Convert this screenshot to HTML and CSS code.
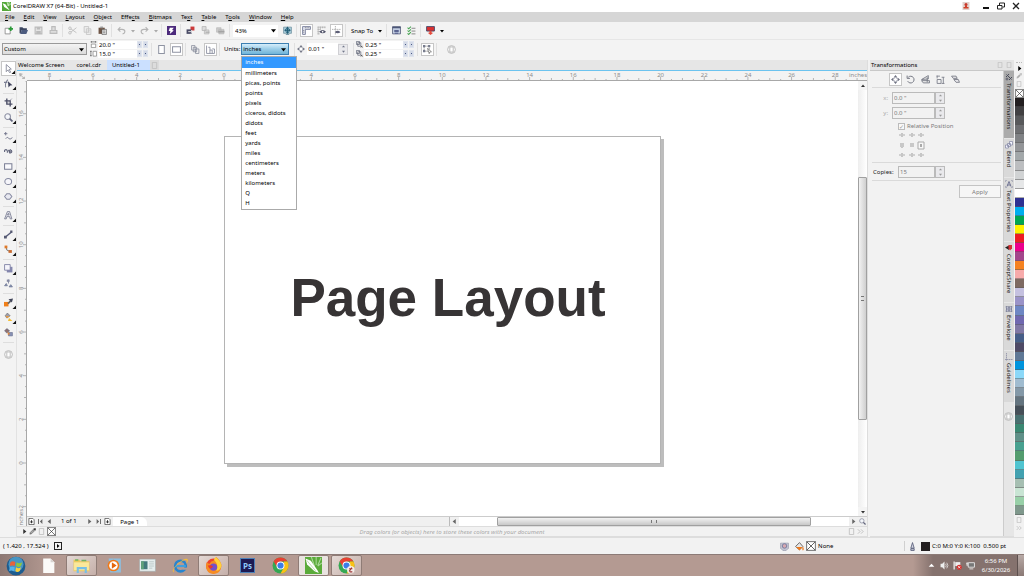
FILE: index.html
```html
<!DOCTYPE html>
<html lang="en">
<head>
<meta charset="utf-8">
<title>CorelDRAW X7 (64-Bit) - Untitled-1</title>
<link rel="stylesheet" href="styles.css">
</head>
<body>
<svg class="defs" aria-hidden="true">
  <symbol id="new" viewBox="0 0 16 16"><path d="M2 4h9v10H2z" fill="#fff" stroke="#888" stroke-width="1.5"/><path d="M12 1v8M8 5h8" stroke="#2d9b3a" stroke-width="3"/></symbol>
  <symbol id="open" viewBox="0 0 16 16"><path d="M1 2h5l2 2h6v3H5l-2 6H1z" fill="#3c4660"/><path d="M5 7h11l-3 7H2z" fill="#4d5c80"/></symbol>
  <symbol id="save" viewBox="0 0 16 16"><path d="M2 2h12v12H2z" fill="#e3e3e3" stroke="#bbb" stroke-width="2"/><path d="M5 2h6v4H5zM4 9h8v5H4z" fill="#bbb"/></symbol>
  <symbol id="print" viewBox="0 0 16 16"><path d="M5 1h6v7H5zM2 8h12v5H2z" fill="#ddd" stroke="#bbb" stroke-width="2"/></symbol>
  <symbol id="cut" viewBox="0 0 16 16"><path d="M5 5l10 7M5 11l10-8" stroke="#bbb" stroke-width="1.5"/><circle cx="3.5" cy="4" r="2.3" fill="none" stroke="#bbb" stroke-width="1.5"/><circle cx="3.5" cy="12" r="2.3" fill="none" stroke="#bbb" stroke-width="1.5"/></symbol>
  <symbol id="copy" viewBox="0 0 16 16"><path d="M2 1h8v10H2zM6 5h8v10H6z" fill="#eee" stroke="#c4c4c4" stroke-width="1.5"/><path d="M8 8h4M8 11h4" stroke="#c4c4c4"/></symbol>
  <symbol id="paste" viewBox="0 0 16 16"><path d="M1 3h11v11H1z" fill="#6e5546"/><path d="M4 1h5v3H4z" fill="#999"/><path d="M7 6h8v9H7z" fill="#e8e8e8" stroke="#444"/><path d="M9 9h4M9 12h4" stroke="#444"/></symbol>
  <symbol id="undo" viewBox="0 0 16 16"><path d="M6 2L2 6l4 4M2 6h7q5 0 5 4 0 3-4 4" fill="none" stroke="#b4b4b4" stroke-width="2"/></symbol>
  <symbol id="redo" viewBox="0 0 16 16"><path d="M10 2l4 4-4 4M14 6H7q-5 0-5 4 0 3 4 4" fill="none" stroke="#b4b4b4" stroke-width="2"/></symbol>
  <symbol id="caret" viewBox="0 0 8 8"><path d="M0 2h8L4 7z" fill="currentColor"/></symbol>
  <symbol id="connect" viewBox="0 0 16 16"><path d="M0 0h16v16H0z" fill="#4c2a7c"/><path d="M5 3h7L9 7l3 1-7 6 1-5H3z" fill="#fff"/></symbol>
  <symbol id="import" viewBox="0 0 16 16"><path d="M8 1h7v7H8z" fill="#cc3b3b"/><path d="M1 6h9v8H1z" fill="#4a4c66"/><path d="M4 10h8M9 7l3 3-3 3" fill="none" stroke="#f4f4f4" stroke-width="1.5"/></symbol>
  <symbol id="export" viewBox="0 0 16 16"><path d="M2 1h7v7H2zM6 7h8v7H6z" fill="#ddd" stroke="#b8b8b8" stroke-width="1.5"/><path d="M8 11h7" stroke="#aaa" stroke-width="2"/></symbol>
  <symbol id="pdf" viewBox="0 0 16 16"><path d="M1 3h8v8H1zM5 6h9v8H5z" fill="#ccc" stroke="#b0b0b0"/><path d="M4 10h11" stroke="#a4a4a4" stroke-width="3"/></symbol>
  <symbol id="full" viewBox="0 0 16 16"><path d="M1 2h14v11H1z" fill="#a9cddb" stroke="#7b9aa8" stroke-width="1.5"/><path d="M5 15h6" stroke="#7b9aa8" stroke-width="2"/><path d="M8 1l3 4H5zM8 14l3-4H5zM2 7.500l4-3v6zM14 7.500l-4-3v6z" fill="#235f78"/><path d="M8 4v7M5 7.500h6" stroke="#235f78" stroke-width="2"/></symbol>
  <symbol id="rulers" viewBox="0 0 16 16"><path d="M1 1h14v5H6v9H1z" fill="#dfe3ef" stroke="#737995" stroke-width="1.5"/><path d="M6 2v2M9 2v2M12 2v2M2 8h2M2 11h2" stroke="#555"/></symbol>
  <symbol id="grid" viewBox="0 0 16 16"><path d="M1 2h14M1 6h6M1 10h4M1 14h4M2 1v14M6 1v5M10 1v3M14 1v3" stroke="#9a9a9a"/><path d="M4 10q6-6 12 0-6 6-12 0" fill="#4f5168"/><circle cx="10" cy="10" r="1.5" fill="#fff"/></symbol>
  <symbol id="guides" viewBox="0 0 16 16"><path d="M6 0v16M0 6h16" stroke="#777" stroke-dasharray="2 1"/><path d="M5 11q5-5 10 0-5 4-10 0" fill="#5d5f77"/></symbol>
  <symbol id="options" viewBox="0 0 16 16"><path d="M1 1h14v13H1z" fill="#c8d3e6" stroke="#555d7a" stroke-width="1.5"/><path d="M1 3h14" stroke="#3c466b" stroke-width="2"/><path d="M4 7h8v4H4z" fill="#5b6490"/><path d="M5 13h6" stroke="#5b6490" stroke-width="2"/></symbol>
  <symbol id="checks" viewBox="0 0 16 16"><path d="M1 3l2 2 4-4M1 8l2 2 4-4M1 13l2 2 4-4" fill="none" stroke="#45a350" stroke-width="1.8"/><path d="M8 4h7M8 9h7M8 14h7" stroke="#777" stroke-width="1.5"/></symbol>
  <symbol id="launch" viewBox="0 0 16 16"><path d="M1 1h14v8H1z" fill="#d93131" stroke="#3d4668" stroke-width="1.5"/><path d="M6 9h4v3h3l-5 4-5-4h3z" fill="#e5493a"/></symbol>
  <symbol id="pw" viewBox="0 0 16 16"><path d="M3 7h10v8H3z" fill="#fff" stroke="#777" stroke-width="1.5"/><path d="M2 2h12M3 0v4M13 0v4" stroke="#555" stroke-width="1.5"/></symbol>
  <symbol id="ph" viewBox="0 0 16 16"><path d="M7 3h8v11H7z" fill="#fff" stroke="#777" stroke-width="1.5"/><path d="M2 2v12M0 3h4M0 13h4" stroke="#555" stroke-width="1.5"/></symbol>
  <symbol id="portrait" viewBox="0 0 16 16"><path d="M3 1h10v14H3z" fill="#fff" stroke="#8e93a2" stroke-width="1.8"/></symbol>
  <symbol id="landscape" viewBox="0 0 16 16"><path d="M1 3h14v10H1z" fill="#fff" stroke="#8e93a2" stroke-width="1.8"/></symbol>
  <symbol id="pages" viewBox="0 0 16 16"><path d="M1 1h6v8H1zM4 4h6v8H4zM8 7h6v8H8z" fill="#f4f4f4" stroke="#808596" stroke-width="1.3"/></symbol>
  <symbol id="pages2" viewBox="0 0 16 16"><path d="M1 1v14h14M4 4h3v11M7 9h4v6M11 7h4v8" fill="none" stroke="#858a9b" stroke-width="1.5"/></symbol>
  <symbol id="move" viewBox="0 0 16 16"><path d="M8 0l3 4H5zM8 16l3-4H5zM0 8l4-3v6zM16 8l-4-3v6z" fill="#6d7080"/><path d="M6 4h4v2h2v4h-2v2H6v-2H4V6h2z" fill="#fff" stroke="#888b99" stroke-width="1.2"/></symbol>
  <symbol id="dup" viewBox="0 0 16 16"><path d="M1 1h7v7H1zM4 4h7v8H4z" fill="#eee" stroke="#555b70" stroke-width="1.5"/><path d="M11 11l4 4M15 11l-4 4" stroke="#333" stroke-width="1.5"/></symbol>
  <symbol id="treat" viewBox="0 0 16 16"><path d="M2 2h9v9H2z" fill="none" stroke="#777" stroke-width="1.3" stroke-dasharray="3 1"/><path d="M0 0h4v4H0zM9 0h4v4H9zM0 9h4v4H0z" fill="#777c8e"/><path d="M8 6l7 6-3 .5-1 3z" fill="#fff" stroke="#444"/></symbol>
  <symbol id="ring" viewBox="0 0 16 16"><circle cx="8" cy="8" r="7" fill="#f5f5f5" stroke="#b4b4b4" stroke-width="1.5"/><path d="M5 3.500h6v9H5z" fill="#fff" stroke="#b4b4b4" stroke-width="1.5"/></symbol>
  <symbol id="flag" viewBox="0 0 8 8"><path d="M8 1v7H1z" fill="#111"/></symbol>
  <symbol id="pick" viewBox="0 0 16 16"><path d="M4 1l9 8-4 .6 3 5-2 1-3-5-3 3z" fill="#fff" stroke="#777b8e" stroke-width="1.4"/></symbol>
  <symbol id="shape" viewBox="0 0 16 16"><path d="M3 15Q1 7 7 1M0 6h6" fill="none" stroke="#7c8094" stroke-width="1.8"/><path d="M7 4l8 7-4 .5-3 3.500z" fill="#3f435c"/></symbol>
  <symbol id="crop" viewBox="0 0 16 16"><path d="M5 1v10h10M1 5h10v10" fill="none" stroke="#4b4e66" stroke-width="2.4"/><path d="M14 1L5 10" stroke="#656881"/></symbol>
  <symbol id="zoom" viewBox="0 0 16 16"><circle cx="6.5" cy="6.5" r="5" fill="#f4f6fa" stroke="#8a8da0" stroke-width="1.8"/><path d="M10 10l5 5" stroke="#62657c" stroke-width="3"/></symbol>
  <symbol id="free" viewBox="0 0 16 16"><path d="M3 0v6M0 3h6M3 12q3-5 5-1t7-1" fill="none" stroke="#6e7289" stroke-width="1.6"/></symbol>
  <symbol id="smart" viewBox="0 0 16 16"><path d="M1 9V6q3-3 5 1v3" fill="none" stroke="#666a80" stroke-width="2"/><path d="M8 5l2 6q5 0 4-4t-5-1l2 3" fill="#9b9eae" stroke="#4d5168" stroke-width="1.5"/></symbol>
  <symbol id="rect" viewBox="0 0 16 16"><path d="M1 3h13v10H1z" fill="#fafafc" stroke="#7a7e94" stroke-width="1.8"/></symbol>
  <symbol id="ellipse" viewBox="0 0 16 16"><ellipse cx="7.5" cy="8" rx="6" ry="5.5" fill="#f5f5fa" stroke="#8589a0" stroke-width="1.8"/></symbol>
  <symbol id="polygon" viewBox="0 0 16 16"><path d="M5 3h5l4 5-4 5H5L1 8z" fill="#e8e9f1" stroke="#8589a0" stroke-width="1.8"/></symbol>
  <symbol id="textt" viewBox="0 0 16 16"><path d="M1 14L6 1h4l4 13h-3l-1-4H5l-1 4zM6 7h3L8 4z" fill="#e4e5ec" stroke="#73778c" stroke-width="1.4"/></symbol>
  <symbol id="dim" viewBox="0 0 16 16"><path d="M2 13L14 3" stroke="#555a78" stroke-width="2.5"/><path d="M0 10h5v5H0zM11 1h4v4h-4z" fill="#565a72"/></symbol>
  <symbol id="conn" viewBox="0 0 16 16"><path d="M4 3l1 6 7 3" fill="none" stroke="#666" stroke-width="1.5"/><path d="M1 1h5v5H1z" fill="#df7928"/><path d="M8 9h6v5H8z" fill="#c96b30"/></symbol>
  <symbol id="shadow" viewBox="0 0 16 16"><path d="M5 5h10v10H5z" fill="#8386ad"/><path d="M1 1h10v10H1z" fill="#f5f5fb" stroke="#7a7da1" stroke-width="1.5"/></symbol>
  <symbol id="transp" viewBox="0 0 16 16"><path d="M8 1v7M4 8l-3 4h5zM12 10l-3 4h6z" stroke="#6b7290" stroke-width="1.3" fill="#8a9abb"/><path d="M5 1h5v4H5z" fill="#8388a1"/></symbol>
  <symbol id="eye" viewBox="0 0 16 16"><path d="M0 7h8v8H0z" fill="#f07f18"/><path d="M7 10l5-5" stroke="#666" stroke-width="3"/><path d="M8 2l6 6 2-7z" fill="#41455a"/></symbol>
  <symbol id="fill" viewBox="0 0 16 16"><path d="M6 0l5 5-6 4-3-4z" fill="#9c9eae" stroke="#666"/><path d="M3 5l7 1-5 3z" fill="#f09a38"/><path d="M9 9l6 5H7z" fill="#f4be36"/></symbol>
  <symbol id="sfill" viewBox="0 0 16 16"><path d="M5 1l5 4-5 4-4-4z" fill="#8d7170" stroke="#596080"/><path d="M8 8h7v6H8z" fill="#8791b5" stroke="#626a89"/><path d="M6 6l5 4-4 3z" fill="#d98742"/></symbol>
  <symbol id="rot" viewBox="0 0 16 16"><path d="M4 4a6 6 0 1 1-1 7M2 1v5h5" fill="none" stroke="#70737f" stroke-width="1.7"/></symbol>
  <symbol id="scale" viewBox="0 0 16 16"><path d="M1 8L13 1v6zM1 10h14v4H4z" fill="#eee" stroke="#70737f" stroke-width="1.5"/><path d="M11 4v9" stroke="#70737f" stroke-width="1.5"/></symbol>
  <symbol id="size" viewBox="0 0 16 16"><path d="M2 8h7v7H2zM2 1v5M1 2h6M13 4v11M10 15h5M10 4h5" fill="none" stroke="#777a86" stroke-width="1.5"/></symbol>
  <symbol id="skew" viewBox="0 0 16 16"><path d="M1 2h8l2 4H4zM5 8h8l2 5H9z" fill="#e6e6ea" stroke="#737681" stroke-width="1.5"/></symbol>
  <symbol id="docs" viewBox="0 0 16 16"><path d="M3 1h10v14H3z" fill="none" stroke="#c0c0c0" stroke-width="2"/></symbol>
  <symbol id="addpage" viewBox="0 0 16 16"><path d="M2 1h9l3 3v11H2z" fill="#fff" stroke="#333" stroke-width="1.5"/><path d="M8 5v7M5 9h6" stroke="#222" stroke-width="2"/></symbol>
  <symbol id="right" viewBox="0 0 8 8"><path d="M2 0l5 4-5 4z" fill="currentColor"/></symbol>
  <symbol id="left" viewBox="0 0 8 8"><path d="M6 0L1 4l5 4z" fill="currentColor"/></symbol>
  <symbol id="first" viewBox="0 0 8 8"><path d="M7 0L3 4l4 4zM0 0h1.500v8H0z" fill="currentColor"/></symbol>
  <symbol id="last" viewBox="0 0 8 8"><path d="M1 0l4 4-4 4zM6.500 0H8v8H6.500z" fill="currentColor"/></symbol>
  <symbol id="drop" viewBox="0 0 16 16"><path d="M2 14l1-4 6-6 3 3-6 6z" fill="#aaa" stroke="currentColor"/><path d="M9 2l5 5 2-5-2-2z" fill="currentColor"/></symbol>
  <symbol id="none" viewBox="0 0 16 16"><path d="M1 1h14v14H1z" fill="#fff" stroke="#555" stroke-width="1.3"/><path d="M1 1l14 14M15 1L1 15" stroke="#333" stroke-width="1.2"/></symbol>
  <symbol id="chev" viewBox="0 0 16 16"><path d="M2 3l5 5-5 5M9 3l5 5-5 5" fill="none" stroke="#bbb" stroke-width="2"/></symbol>
  <symbol id="blend" viewBox="0 0 16 16"><path d="M1 8h6v6H1zM5 5h6v6H5zM9 1h6v7H9z" fill="#f4f4ff" stroke="#8084a0" stroke-width="1.4"/></symbol>
  <symbol id="tprop" viewBox="0 0 16 16"><path d="M4 13L8 3l4 10M5 10h6" fill="none" stroke="#62668a" stroke-width="1.7"/><path d="M1 1h3M12 1h3M1 15h3M12 15h3M1 1v3M15 1v3M1 12v3M15 12v3" stroke="#83869d"/></symbol>
  <symbol id="share" viewBox="0 0 16 16"><path d="M0 7l8-4v9z" fill="#222"/><path d="M7 2h7v7l-4 4-3-4z" fill="#d42f35"/></symbol>
  <symbol id="env" viewBox="0 0 16 16"><path d="M2 3q6 3 12 0-3 5 0 10-6-3-12 0 3-5 0-10M8 2v12M3 8h10" fill="#dde" stroke="#666b86" stroke-width="1.5"/></symbol>
  <symbol id="guide" viewBox="0 0 16 16"><path d="M3 0v16M0 13h16" stroke="#8588a0" stroke-width="1.5" stroke-dasharray="3 1"/></symbol>
  <symbol id="trans" viewBox="0 0 16 16"><path d="M3 3l10 10M2 8l6-6M8 14l6-6" stroke="#484b5a" stroke-width="2"/><circle cx="4" cy="12" r="2" fill="none" stroke="#484b5a" stroke-width="1.5"/></symbol>
  <symbol id="chrome" viewBox="0 0 32 32"><circle cx="16" cy="16" r="15" fill="#35a853"/><path d="M3 8.500A15 15 0 0 1 29 8.500H16L9.500 19z" fill="#e84133"/><path d="M29 8.500A15 15 0 0 1 16 31l6.500-11.300V8.500z" fill="#fbc116"/><circle cx="16" cy="16" r="7.5" fill="#fff"/><circle cx="16" cy="16" r="5.8" fill="#3b7de8"/></symbol>
</svg>
<div class="app">
  <header class="titlebar">
    <svg class="logo" viewBox="0 0 16 16"><path d="M0 0h16v16H0z" fill="#54a83a"/><path d="M1 2l5 2 8 11-10-6z" fill="#fff"/><path d="M9 0l2 7M13 0l-2 7M16 3l-5 4" stroke="#d5efc8" stroke-width="1.5"/></svg>
    <h1 class="title">CorelDRAW X7 (64-Bit) - Untitled-1</h1>
    <button class="winbtn" aria-label="Account"><svg viewBox="0 0 16 16"><path d="M1 0h14v16H1z" fill="#e1d2cd"/><circle cx="8" cy="5" r="3" fill="#c9362a"/><path d="M6 7h4v3h3v3H3v-3h3z" fill="#cf4029"/></svg></button>
    <button class="winbtn" aria-label="Minimize"><svg viewBox="0 0 16 16"><path d="M2 12h12" stroke="#111" stroke-width="4"/></svg></button>
    <button class="winbtn" aria-label="Restore"><svg viewBox="0 0 16 16"><path d="M5 6V2h10v8h-4" fill="none" stroke="#222" stroke-width="2"/><path d="M1 7h9v7H1z" fill="none" stroke="#222" stroke-width="2"/></svg></button>
    <button class="winbtn" aria-label="Close"><svg viewBox="0 0 16 16"><path d="M2 2l12 12M14 2L2 14" stroke="#222" stroke-width="2.5"/></svg></button>
  </header>
  <nav class="menubar">
    <button><u>F</u>ile</button><button><u>E</u>dit</button><button><u>V</u>iew</button><button><u>L</u>ayout</button><button><u>O</u>bject</button><button>Effe<u>c</u>ts</button><button><u>B</u>itmaps</button><button>Te<u>x</u>t</button><button><u>T</u>able</button><button>T<u>o</u>ols</button><button><u>W</u>indow</button><button><u>H</u>elp</button>
  </nav>
  <div class="toolbar">
    <button class="tb" aria-label="New"><svg><use href="#new"/></svg></button>
    <button class="tb" aria-label="Open"><svg><use href="#open"/></svg></button>
    <button class="tb" aria-label="Save"><svg><use href="#save"/></svg></button>
    <button class="tb" aria-label="Print"><svg><use href="#print"/></svg></button>
    <i class="sep"></i>
    <button class="tb" aria-label="Cut"><svg><use href="#cut"/></svg></button>
    <button class="tb" aria-label="Copy"><svg><use href="#copy"/></svg></button>
    <button class="tb" aria-label="Paste"><svg><use href="#paste"/></svg></button>
    <i class="sep"></i>
    <button class="tb" aria-label="Undo"><svg><use href="#undo"/></svg></button>
    <button class="arrow dim" aria-label="Undo list"><svg><use href="#caret"/></svg></button>
    <button class="tb" aria-label="Redo"><svg><use href="#redo"/></svg></button>
    <button class="arrow dim" aria-label="Redo list"><svg><use href="#caret"/></svg></button>
    <i class="sep"></i>
    <button class="tb" aria-label="Connect"><svg><use href="#connect"/></svg></button>
    <i class="sep"></i>
    <button class="tb" aria-label="Import"><svg><use href="#import"/></svg></button>
    <button class="tb" aria-label="Export"><svg><use href="#export"/></svg></button>
    <button class="tb" aria-label="Publish to PDF"><svg><use href="#pdf"/></svg></button>
    <i class="sep"></i>
    <span class="combo zoomlevel"><select aria-label="Zoom level"><option>43%</option></select><svg><use href="#caret"/></svg></span>
    <button class="tb" aria-label="Full-screen preview"><svg><use href="#full"/></svg></button>
    <i class="sep"></i>
    <button class="tb on" aria-label="Show rulers"><svg><use href="#rulers"/></svg></button>
    <button class="tb" aria-label="Show grid"><svg><use href="#grid"/></svg></button>
    <button class="tb on" aria-label="Show guidelines"><svg><use href="#guides"/></svg></button>
    <i class="sep"></i>
    <button class="snap">Snap To <svg><use href="#caret"/></svg></button>
    <i class="sep"></i>
    <button class="tb" aria-label="Options"><svg><use href="#options"/></svg></button>
    <button class="tb" aria-label="Workspace"><svg><use href="#checks"/></svg></button>
    <i class="sep"></i>
    <button class="tb" aria-label="Application launcher"><svg><use href="#launch"/></svg></button>
    <button class="arrow" aria-label="Launcher list"><svg><use href="#caret"/></svg></button>
  </div>
  <div class="propbar">
    <span class="combo pagesize"><select aria-label="Page size"><option>Custom</option></select><svg><use href="#caret"/></svg></span>
    <div class="pair">
      <label><svg><use href="#pw"/></svg><input aria-label="Page width" value="20.0 &quot;"><span class="spin2"><i></i><i></i></span></label>
      <label><svg><use href="#ph"/></svg><input aria-label="Page height" value="15.0 &quot;"><span class="spin2"><i></i><i></i></span></label>
    </div>
    <i class="sep"></i>
    <button class="tb" aria-label="Portrait"><svg><use href="#portrait"/></svg></button>
    <button class="tb on" aria-label="Landscape"><svg><use href="#landscape"/></svg></button>
    <i class="sep"></i>
    <button class="tb" aria-label="All pages"><svg><use href="#pages"/></svg></button>
    <button class="tb on" aria-label="Current page"><svg><use href="#pages2"/></svg></button>
    <i class="sep"></i>
    <label class="unitslabel" for="units">Units:</label>
    <span class="combo units"><select id="units"><option>inches</option></select><svg><use href="#caret"/></svg>
      <ul class="menu" role="listbox" aria-label="Units">
        <li role="option" aria-selected="true">inches</li><li role="option">millimeters</li><li role="option">picas, points</li><li role="option">points</li><li role="option">pixels</li><li role="option">ciceros, didots</li><li role="option">didots</li><li role="option">feet</li><li role="option">yards</li><li role="option">miles</li><li role="option">centimeters</li><li role="option">meters</li><li role="option">kilometers</li><li role="option">Q</li><li role="option">H</li>
      </ul>
    </span>
    <i class="sep"></i>
    <label class="nudge"><svg><use href="#move"/></svg><input aria-label="Nudge distance" value="0.01 &quot;"><span class="spin"><svg><use href="#caret"/></svg><svg><use href="#caret"/></svg></span></label>
    <i class="sep"></i>
    <div class="pair">
      <label><svg><use href="#dup"/></svg><input aria-label="Duplicate x" value="0.25 &quot;"><span class="spin2"><i></i><i></i></span></label>
      <label><svg><use href="#dup"/></svg><input aria-label="Duplicate y" value="0.25 &quot;"><span class="spin2"><i></i><i></i></span></label>
    </div>
    <i class="sep"></i>
    <button class="tb on" aria-label="Treat as filled"><svg><use href="#treat"/></svg></button>
    <i class="sep"></i>
    <button class="tb wide" aria-label="Customize"><svg><use href="#ring"/></svg></button>
  </div>

  <div class="work">
    <aside class="toolbox" id="toolbox"></aside>
    <main class="doc">
      <div class="tabs"><button>Welcome Screen</button><button>corel.cdr</button><button class="active">Untitled-1</button><button class="tabend" aria-label="Start page"><svg><use href="#docs"/></svg></button></div>
      <div class="docgrid">
        <div class="corner"><svg viewBox="0 0 16 16"><path d="M1 3h9M3 1v9M5 6l9 9M14 10v5H9" stroke="#555" stroke-width="1.5" fill="none" stroke-dasharray="3 1"/></svg></div>
        <svg class="hruler" id="hruler"></svg>
        <svg class="vruler" id="vruler"></svg>
        <div class="canvas"><div class="page"><p>Page Layout</p></div></div>
        <div class="vscroll">
          <button aria-label="Scroll up"><svg class="up"><use href="#caret"/></svg></button>
          <div class="track"><div class="thumb"></div></div>
          <button aria-label="Scroll down"><svg><use href="#caret"/></svg></button>
        </div>
        <div class="pagenav">
          <button aria-label="Add page before"><svg class="pg"><use href="#addpage"/></svg></button><button aria-label="First page"><svg><use href="#first"/></svg></button><button aria-label="Previous page"><svg><use href="#left"/></svg></button><span class="count">1 of 1</span><button aria-label="Next page"><svg><use href="#right"/></svg></button><button aria-label="Last page"><svg><use href="#last"/></svg></button><button aria-label="Add page after"><svg class="pg"><use href="#addpage"/></svg></button><button class="pagetab">Page 1</button>
          <div class="hscroll"><button aria-label="Scroll left"><svg><use href="#left"/></svg></button><div class="track"><div class="thumb"></div></div><button aria-label="Scroll right"><svg><use href="#right"/></svg></button><button aria-label="Navigator"><svg class="pg"><use href="#zoom"/></svg></button></div>
        </div>
      </div>
      <div class="docpal"><button aria-label="Palette menu"><svg class="tiny"><use href="#right"/></svg></button><button aria-label="Eyedropper"><svg><use href="#drop"/></svg></button><svg><use href="#docs"/></svg><button aria-label="No color"><svg class="big"><use href="#none"/></svg></button><p>Drag colors (or objects) here to store these colors with your document</p><svg><use href="#docs"/></svg><svg><use href="#chev"/></svg></div>
    </main>
    <section class="docker">
      <header><h2>Transformations</h2><svg><use href="#docs"/></svg><svg><use href="#docs"/></svg></header>
      <div class="dockrow">
        <form class="panel">
          <div class="modes"><button type="button" class="tb on" aria-label="Position"><svg><use href="#move"/></svg></button><button type="button" class="tb" aria-label="Rotate"><svg><use href="#rot"/></svg></button><button type="button" class="tb" aria-label="Scale and mirror"><svg><use href="#scale"/></svg></button><button type="button" class="tb" aria-label="Size"><svg><use href="#size"/></svg></button><button type="button" class="tb" aria-label="Skew"><svg><use href="#skew"/></svg></button></div>
          <label class="field"><span>x:</span><input value="0.0 &quot;"><span class="spin"><svg><use href="#caret"/></svg><svg><use href="#caret"/></svg></span></label>
          <label class="field"><span>y:</span><input value="0.0 &quot;"><span class="spin"><svg><use href="#caret"/></svg><svg><use href="#caret"/></svg></span></label>
          <label class="rel"><input type="checkbox" checked> Relative Position</label>
          <svg class="anchors" viewBox="0 0 28 28"><path d="M2 4h6M12 4h6M21 4h6M2 24h6M12 24h6M21 24h6" stroke="#d0d0d0" stroke-width="2"/><path d="M5 2v4M15 2v4M24 2v4M5 12v5M5 22v4M15 22v4M24 22v4" stroke="#c6c6c6" stroke-width="2"/><path d="M3 14h4M13 14h4" stroke="#c8c8c8" stroke-width="4"/><path d="M21 11h6v7h-6z" fill="#f7f7f7" stroke="#aaa"/><path d="M24 13v3" stroke="#aaa" stroke-width="2"/></svg>
          <label class="field copies"><span>Copies:</span><input value="15"><span class="spin"><svg><use href="#caret"/></svg><svg><use href="#caret"/></svg></span></label>
          <div class="applyrow"><button type="button" class="apply">Apply</button></div>
        </form>
        <div class="docktabs">
          <button class="active"><svg><use href="#trans"/></svg>Transformations</button>
          <button><svg><use href="#blend"/></svg>Blend</button>
          <button><svg><use href="#tprop"/></svg>Text Properties</button>
          <button><svg><use href="#share"/></svg>ConceptShare</button>
          <button><svg><use href="#env"/></svg>Envelope</button>
          <button><svg><use href="#guide"/></svg>Guidelines</button>
          <svg class="ring"><use href="#ring"/></svg>
        </div>
      </div>
    </section>
    <aside class="palette">
      <i class="grip"></i>
      <svg class="tiny"><use href="#right"/></svg><svg class="faint"><use href="#drop"/></svg><svg><use href="#docs"/></svg>
      <svg class="big"><use href="#none"/></svg>
      <div class="swatches" id="swatches"></div>
      <svg><use href="#docs"/></svg><svg><use href="#chev"/></svg>
    </aside>
  </div>

  <footer class="status">
    <span>( 1.420 , 17.524 )</span>
    <button class="play" aria-label="Cursor info"><svg><use href="#right"/></svg></button>
    <div class="fillinfo"><svg viewBox="0 0 16 16"><path d="M1 2h14v9l-4 4H5l-4-4z" fill="#c4c5d2" stroke="#888ba0"/><circle cx="8" cy="7" r="4" fill="#d8a8b0" stroke="#6a769c" stroke-width="1.5"/></svg><svg viewBox="0 0 16 16"><path d="M1 8l7-7 6 7-6 6z" fill="#e6e6e6" stroke="#555" stroke-width="1.5"/><path d="M2 9h11l-5 6zM14 8q3 5 0 7-2-2 0-7" fill="#ef7a1c"/></svg><svg class="big"><use href="#none"/></svg><span>None</span></div>
    <div class="penfo"><svg viewBox="0 0 16 16"><path d="M5 11L8 1l3 10zM5 12h6v3H5z" fill="#d7d9e4" stroke="#555b78" stroke-width="1.5"/></svg><i class="chip"></i><span>C:0 M:0 Y:0 K:100&nbsp; 0.500 pt</span></div>
  </footer>

  <div class="taskbar">
    <button class="start" aria-label="Start"><svg viewBox="0 0 32 32"><circle cx="16" cy="16" r="15" fill="#1d5c8f"/><circle cx="16" cy="13" r="12" fill="#4796c4"/><path d="M7 10q4-3 8 0l-1 6q-4-2-8 0z" fill="#e8633a"/><path d="M17 10q4 3 9 0l-2 6q-4 3-8 0z" fill="#8fc63f"/><path d="M6 18q4-2 8 0l-1 6q-4-2-8 0z" fill="#57b3ec"/><path d="M16 18q4 3 8 0l-2 6q-4 3-7 0z" fill="#fbd03a"/></svg></button>
    <button aria-label="Document"><svg viewBox="0 0 32 32"><path d="M6 3h14l7 7v20H6z" fill="#fbfaf8"/><path d="M20 3l7 7h-7z" fill="#d8d3d0"/></svg></button>
    <button class="open" aria-label="Explorer"><svg viewBox="0 0 32 32"><path d="M1 5h11l2 3h17v19H1z" fill="#ecca5c"/><path d="M2 10h28v15H2z" fill="#fae89b"/><path d="M4 4h6v3H4zM16 5h9v3h-9z" fill="#70b267"/><path d="M7 30V19h19v11h-4v-7H11v7z" fill="#77bfe6"/></svg></button>
    <button aria-label="Media Player"><svg viewBox="0 0 32 32"><path d="M5 3h23v26H8z" fill="#8ebddd"/><circle cx="14" cy="16" r="11" fill="#f07a19"/><circle cx="14" cy="16" r="8" fill="#fff"/><path d="M11 10l9 6-9 6z" fill="#e5660c"/></svg></button>
    <button aria-label="Viewer"><svg viewBox="0 0 32 32"><path d="M1 4h30v23H1z" fill="#e6eeee" stroke="#9da9a9"/><path d="M4 8h12v15H4z" fill="#43797c"/><path d="M4 8h5v15H4z" fill="#61a27b"/><path d="M19 9h9M19 13h9M19 17h9M19 21h6" stroke="#9aa"/></svg></button>
    <button aria-label="Internet Explorer"><svg viewBox="0 0 32 32"><circle cx="16" cy="17" r="10" fill="none" stroke="#2785cf" stroke-width="5"/><path d="M8 17h18" stroke="#3fa0df" stroke-width="4"/><path d="M20 20h9v4h-9z" fill="#b49a92"/><path d="M4 29Q-4 27 11 12 27-1 30 5q1 3-4 8Q32 1 19 8 0 20 4 29" fill="#f3bd3d"/></svg></button>
    <button class="open" aria-label="Firefox"><svg viewBox="0 0 32 32"><circle cx="16" cy="17" r="14" fill="#ee442d"/><path d="M3 10l5 3q4-6 8-6l5-7q10 8 10 17-1 14-15 15Q2 31 2 17z" fill="#f78c22"/><path d="M17 5l3-5q10 8 11 16-2 10-10 10 6-10-4-21" fill="#ffd23b"/><circle cx="16" cy="19" r="7" fill="#7650c8"/><path d="M5 16q8-2 10 2-3 5-7 3z" fill="#e8382e"/></svg></button>
    <button class="ps">Ps</button>
    <button aria-label="Chrome"><svg><use href="#chrome"/></svg></button>
    <button class="open front" aria-label="CorelDRAW"><svg viewBox="0 0 32 32"><path d="M0 0h32v32H0z" fill="#5bab3b"/><path d="M18 18L12 0M21 15V0M24 16l6-14M24 17l8-6" stroke="#a9d898" stroke-width="2"/><path d="M1 3l10 4 13 19 2 4-8-3L4 14z" fill="#fff"/><path d="M3 6l17 20" stroke="#8bc473"/></svg></button>
    <button class="open" aria-label="Chrome profile"><svg viewBox="0 0 32 32"><use href="#chrome" width="32" height="32"/><circle cx="24" cy="24" r="7" fill="#f5ece8"/><path d="M21 27l5-7M21 22h6M22 28h5" stroke="#933" stroke-width="2"/></svg></button>
    <div class="tray">
      <svg viewBox="0 0 16 16"><path d="M3 10l5-5 5 5z" fill="#fff"/></svg>
      <svg viewBox="0 0 16 16"><path d="M1 5h3l4-4v14l-4-4H1z" fill="#eee"/><path d="M10 5q2 3 0 6M12 3q4 5 0 10" fill="none" stroke="#eee" stroke-width="1.3"/></svg>
      <svg viewBox="0 0 16 16"><path d="M2 1v14" stroke="#fff" stroke-width="2"/><path d="M4 2h9v7H4z" fill="#eee"/><circle cx="11" cy="11" r="4.5" fill="#d8302e"/><path d="M9 9l4 4M13 9l-4 4" stroke="#fff" stroke-width="1.3"/></svg>
      <svg viewBox="0 0 16 16"><path d="M4 3h11v8H4z" fill="#777" stroke="#eee" stroke-width="1.5"/><path d="M6 14h7M2 2v7M0 5h4" stroke="#eee" stroke-width="1.5"/></svg>
      <div class="clock"><time>6:56 PM</time><time>6/30/2026</time></div>
      <button class="peek" aria-label="Show desktop"></button>
    </div>
  </div>
</div>
<script src="app.js"></script>
</body>
</html>
```

FILE: styles.css
```css
* { box-sizing: border-box; }
html, body { height: 100%; margin: 0; }
body { font: 6px/10px "Noto Sans", "Open Sans", sans-serif; color: #000; background: #f2f2f2; overflow: hidden; }
button, input, select { font: inherit; color: inherit; margin: 0; padding: 0; border: 0; background: none; border-radius: 0; min-width: 0; }
h1, h2, p, ul { margin: 0; padding: 0; font: inherit; }
svg { display: block; flex: none; width: 9px; height: 9px; }
.defs { display: none; }
.app { display: flex; flex-direction: column; height: 100%; }

.titlebar { display: flex; align-items: center; height: 12px; padding: 0 2px; background: #fff; gap: 2px; flex: none; }
.title { flex: 1; }
.winbtn { width: 13px; display: flex; justify-content: center; }
.winbtn:nth-of-type(1) { margin-right: 5px; }
.winbtn svg { width: 8px; height: 8px; }
.menubar { display: flex; height: 10px; background: #d6d6d6; padding-left: 5px; gap: 9px; flex: none; }
.menubar button { line-height: 10px; }

.toolbar, .propbar { display: flex; align-items: center; flex: none; background: #f3f3f3; }
.toolbar { height: 17px; padding-left: 1px; }
.propbar { height: 21px; padding: 0 2px 2px; border-top: 1px solid #e6e6e6; }
.tb { width: 15px; height: 15px; display: flex; align-items: center; justify-content: center; flex: none; }
.tb.on { width: 13px; height: 13px; margin: 0 1px; background: #fff; border: 1px solid #c6c6c6; }
.tb.wide { width: 25px; }
.sep { width: 1px; height: 13px; margin: 0 2px 0 1px; background: #e0e0e0; flex: none; }
.arrow { width: 8px; display: flex; justify-content: center; }
.arrow svg, .snap svg { width: 4px; height: 4px; }
.arrow.dim { color: #aaa; }
.snap { display: flex; align-items: center; gap: 5px; margin: 0 3px; }
.combo { position: relative; display: flex; align-items: center; height: 12px; }
.combo select { appearance: none; width: 100%; height: 100%; padding-left: 2px; }
.combo > svg { position: absolute; right: 2px; width: 5px; height: 5px; pointer-events: none; }
.zoomlevel { width: 45px; margin: 0 2px 0 1px; background: #fff; }
.pagesize { width: 85px; border: 1px solid #9a9a9a; background: linear-gradient(#f4f4f4, #dcdcdc); margin-right: 3px; }
.pagesize select, .units select { padding-left: 1px; }
.units { width: 48px; border: 1px solid #3c7fb1; background: linear-gradient(#d6eefb, #9bcde8 50%, #6fb4d8); margin-right: 4px; }
.unitslabel { margin: 0 1px 0 2px; }
.menu { position: absolute; z-index: 5; left: -1px; top: 12px; width: 56px; background: #fff; border: 1px solid #aaa; list-style: none; padding-bottom: 1px; }
.menu li { height: 10px; line-height: 10px; padding-left: 3px; white-space: nowrap; }
.menu li[aria-selected] { background: #3399ff; color: #fff; height: 11px; line-height: 11px; }
.pair { display: flex; flex-direction: column; gap: 1px; margin-right: 2px; }
.pair label { display: flex; align-items: center; height: 8px; }
.pair svg { width: 7px; height: 7px; margin-right: 1px; }
.pair input { width: 39px; height: 8px; background: #fff; padding-left: 1px; }
.spin2 { display: flex; gap: 1px; width: 11px; }
.spin2 i { width: 5px; height: 7px; background: #d3d9e6; border: 1px solid #dfe4ee; }
.spin2 i::after { content: ""; display: block; width: 1px; height: 1px; margin: 2px 1px; background: #4a5a88; }
.nudge { display: flex; align-items: center; height: 12px; }
.nudge > svg { margin: 0 2px 0 0; width: 8px; height: 8px; }
.nudge input { width: 31px; height: 12px; background: #fff; padding-left: 1px; }
.nudge .spin { margin-right: 4px; }
.spin { display: flex; flex-direction: column; width: 10px; height: 11px; justify-content: space-around; align-items: center; background: #e9e9ec; border: 1px solid #d0d0d4; flex: none; color: #707689; }
.spin svg { width: 3px; height: 3px; }
.spin svg:first-child, .up { transform: rotate(180deg); }

.work { display: flex; flex: 1; min-height: 0; }
.toolbox { width: 17px; padding: 1px 0 0 1px; background: #f3f3f3; flex: none; border-right: 1px solid #e2e2e2; }
.toolbox .tb { position: relative; margin: 0; }
.toolbox .tb.on { width: 15px; height: 15px; }
.toolbox .tb .corner-mark { position: absolute; right: 0; bottom: 1px; width: 4px; height: 4px; }
.toolbox hr { border: 0; height: 1px; margin: 2px 2px 1px; background: #dedede; }
.toolbox .tb.last { margin-top: 4px; }

.doc { flex: 1; min-width: 0; display: flex; flex-direction: column; border-right: 1px solid #ddd; }
.tabs { display: flex; height: 11px; background: #e6e6e6; border-bottom: 1px solid #6cc3ef; flex: none; }
.tabs button { padding: 0 6px; line-height: 10px; }
.tabs button:first-child { padding-left: 1px; }
.tabs .active { background: #cbe0ff; padding: 0 10px 0 5px; }
.tabend svg { width: 7px; height: 7px; }
.tabs .tabend { background: #dcdcdc; padding: 0 1px; }
.docgrid { flex: 1; min-height: 0; display: grid; grid-template-columns: 10px minmax(0, 1fr) 9px; grid-template-rows: 10px minmax(0, 1fr) 10px; }
.corner { background: #f3f3f3; padding: 2px; }
.corner svg { width: 6px; height: 6px; }
.hruler { grid-column: 2 / 4; width: 100%; height: 10px; background: #f3f3f3; border-bottom: 1px solid #a8a8a8; }
.vruler { grid-row: 2 / 4; width: 10px; height: 100%; background: #f3f3f3; border-right: 1px solid #a8a8a8; }
.hruler text, .vruler text { font-size: 6px; fill: #8c8c8c; }
.canvas { background: #fff; min-width: 0; padding: 55px 0 0 197px; overflow: hidden; }
.page { width: 437px; height: 328px; border: 1px solid #b4b4b4; background: #fff; box-shadow: 3px 3px 0 #bdbdbd; display: flex; align-items: center; justify-content: center; }
.page p { font: bold 53px/60px "Liberation Sans", Arial, sans-serif; color: #373435; padding: 0 0 5px 11px; white-space: nowrap; }
.vscroll { display: flex; flex-direction: column; background: #f4f4f4; }
.vscroll button { height: 9px; display: flex; align-items: center; justify-content: center; color: #333; }
.vscroll svg { width: 4px; height: 4px; }
.vscroll .track { flex: 1; display: flex; flex-direction: column; padding: 87px 0 87px; background: linear-gradient(90deg, #eee, #fff); }
.thumb { flex: 1; border: 1px solid #a0a0a0; border-radius: 1px; background: linear-gradient(90deg, #f2f2f2, #cfcfcf); display: flex; align-items: center; justify-content: center; }
.vscroll .thumb::after { content: ""; width: 3px; height: 3px; border: solid #777; border-width: 1px 0; }
.pagenav { grid-column: 2 / 4; display: flex; background: #f0f0f0; border-top: 1px solid #ccc; align-items: stretch; }
.pagenav button { width: 9px; display: flex; align-items: center; justify-content: center; color: #666; }
.pagenav svg { width: 5px; height: 5px; }
.pagenav svg.pg { width: 7px; height: 7px; }
.count { padding: 0 8px 0 7px; line-height: 9px; }
.pagenav .pagetab { width: 34px; background: #fff; border-top-right-radius: 6px; color: #000; margin-left: 1px; line-height: 8px; }
.hscroll { flex: 1; display: flex; margin-left: 36%; border-left: 1px solid #bbb; }
.hscroll .track { flex: 1; display: flex; padding: 0 9%; background: #fff; }
.hscroll .thumb { background: linear-gradient(#f2f2f2, #c8c8c8); }
.hscroll .thumb::after { content: ""; width: 4px; height: 3px; border: solid #777; border-width: 0 1px; }
.docpal { display: flex; align-items: center; height: 11px; flex: none; border-top: 1px solid #ddd; border-bottom: 1px solid #ddd; gap: 2px; padding: 0 3px 0 5px; }
.docpal svg { width: 7px; height: 7px; color: #333; }
.docpal svg.tiny { width: 5px; height: 5px; }
.docpal svg.big { width: 9px; height: 9px; }
.docpal p { flex: 1; text-align: center; font-style: italic; color: #a8a8a8; }

.docker { width: 146px; flex: none; display: flex; flex-direction: column; padding-left: 2px; }
.docker header { display: flex; height: 11px; background: #e4e4e4; border-bottom: 1px solid #c8c8c8; align-items: center; padding: 0 2px 0 1px; gap: 3px; flex: none; }
.docker header svg { width: 6px; height: 6px; }
.docker h2 { flex: 1; }
.dockrow { display: flex; flex: 1; min-height: 0; border-bottom: 1px solid #ddd; }
.panel { flex: 1; min-width: 0; padding: 0 2px; color: #7c7c7c; border-right: 1px solid #ccc; }
.modes { display: flex; align-items: center; height: 17px; padding-left: 16px; border-bottom: 1px solid #dadada; margin-bottom: 4px; }
.field { display: flex; align-items: center; height: 12px; margin-bottom: 3px; }
.field > span:first-child { width: 20px; padding-right: 4px; text-align: right; color: #aaa; }
.field input { width: 43px; height: 12px; border: 1px solid #bbb; padding-left: 1px; }
.field .spin { height: 12px; border-color: #bbb; color: #999; }
.rel { display: flex; align-items: center; gap: 2px; padding-left: 26px; height: 8px; }
.rel input { appearance: none; width: 7px; height: 7px; border: 1px solid #bbb; background: #f8f8f8; }
.rel input:checked::after { content: "✓"; display: block; font: 6px/5px "DejaVu Sans", sans-serif; color: #999; }
.anchors { width: 28px; height: 28px; margin: 1px 0 3px 25px; }
.field.copies { margin: 0; padding-top: 1px; border-top: 1px solid #dadada; height: 17px; }
.field.copies > span:first-child { width: 26px; padding: 0 2px 0 1px; text-align: left; color: #222; }
.field.copies input { width: 37px; }
.applyrow { display: flex; justify-content: flex-end; border-top: 1px solid #dadada; padding-top: 4px; margin-top: 1px; }
.apply { width: 42px; height: 13px; border: 1px solid #c4c4c4; background: #f6f6f6; }
.docktabs { width: 10px; display: flex; flex-direction: column; gap: 1px; background: #e6e6e6; flex: none; }
.docktabs button { writing-mode: vertical-rl; display: flex; align-items: center; gap: 2px; padding: 2px 0 9px; width: 10px; background: #d9d9d9; color: #222; line-height: 10px; white-space: nowrap; }
.docktabs button.active { background: #ababab; }
.docktabs svg { width: 8px; height: 8px; }
.docktabs .ring { width: 9px; height: 9px; margin-top: 9px; }

.palette { width: 10px; display: flex; flex-direction: column; align-items: center; gap: 2px; flex: none; padding-bottom: 6px; }
.palette svg { width: 6px; height: 6px; }
.palette svg.tiny { width: 5px; height: 5px; }
.palette svg.big { width: 9px; height: 9px; margin-bottom: -2px; }
.palette svg.faint { color: #bbb; }
.grip { width: 6px; height: 2px; margin-top: 2px; border-top: 1px dotted #bbb; }
.swatches { flex: 1; width: 9px; display: flex; flex-direction: column; min-height: 0; }
.swatches button { flex: 1; border-bottom: 1px solid rgba(90, 90, 90, 0.5); }

.status { display: flex; align-items: center; height: 17px; flex: none; padding: 0 18px 0 3px; border-top: 1px solid #ddd; white-space: nowrap; }
.play { width: 8px; height: 8px; border: 1px solid #222; margin-left: 5px; display: flex; align-items: center; justify-content: center; }
.play svg { width: 4px; height: 4px; }
.fillinfo, .penfo { display: flex; align-items: center; }
.fillinfo { margin-left: auto; gap: 2px; width: 124px; }
.fillinfo svg:first-child { margin-right: 4px; }
.fillinfo .big { width: 10px; height: 10px; }
.penfo { gap: 2px; padding-left: 3px; border-left: 1px solid #d0d0d0; }
.chip { width: 9px; height: 9px; background: #231f20; margin-left: 2px; }

.taskbar { display: flex; height: 22px; flex: none; background: linear-gradient(90deg, #8d7873, #b49a92 50px); border-top: 1px solid #8c7b77; }
.taskbar > button { width: 31px; margin-right: 2px; display: flex; align-items: center; justify-content: center; border-radius: 2px; flex: none; }
.taskbar > button svg { width: 17px; height: 17px; }
.taskbar > .start svg { width: 20px; height: 20px; }
.taskbar > .open { border: 1px solid #8f7c76; background: linear-gradient(135deg, #e4d9d5, #c5afa9); }
.taskbar > .front { background: #e9e3e0; }
.taskbar > .ps { width: 15px; height: 15px; margin: 3px 10px 0 9px; background: #1d1a53; color: #8fc9fb; border: 1px solid #4b80b8; border-radius: 0; font: bold 8px/13px "Open Sans", sans-serif; }
.tray { margin-left: auto; display: flex; align-items: center; gap: 4px; color: #fff; background: linear-gradient(90deg, #b49a92, #85726e 20px); padding-left: 14px; }
.clock { display: flex; flex-direction: column; align-items: center; width: 34px; line-height: 9px; }
.peek { width: 7px; align-self: stretch; border-left: 1px solid #5d504e; background: linear-gradient(#b8aaa6, #8a7975); }
```

FILE: app.js
```js
const NS = "http://www.w3.org/2000/svg";
const UNIT = 43.66;

function add(parent, name, attrs, text) {
  const el = document.createElementNS(NS, name);
  for (const key in attrs) el.setAttribute(key, attrs[key]);
  if (text !== undefined) el.textContent = text;
  parent.appendChild(el);
}

/* Horizontal ruler: a label every two inches, origin at the page's left edge */
const h = document.getElementById("hruler");
for (let n = -4; n <= 14; n++) {
  const x = 197 + n * UNIT;
  add(h, "path", { d: `M${x} 6v4M${x + UNIT / 4} 8v2M${x + UNIT / 2} 7v3M${x + UNIT * 3 / 4} 8v2`, stroke: "#b4b4b4" });
  add(h, "text", { x, y: 6, "text-anchor": "middle" }, Math.abs(n * 2));
}
add(h, "text", { x: 822, y: 6 }, "inches");

/* Vertical ruler: origin at the page's bottom edge */
const v = document.getElementById("vruler");
for (let n = -1; n <= 8; n++) {
  const y = 382 - n * UNIT;
  add(v, "path", { d: `M6 ${y}h4M8 ${y - UNIT / 4}h2M7 ${y - UNIT / 2}h3M8 ${y - UNIT * 3 / 4}h2`, stroke: "#b4b4b4" });
  add(v, "text", { transform: `translate(6 ${y}) rotate(-90)`, "text-anchor": "middle" }, Math.abs(n * 2));
}
add(v, "text", { transform: "translate(6 446) rotate(-90)" }, "inches");

/* Toolbox: "-" draws a divider, "+" marks tools that have a flyout */
const tools = ["pick+", "shape+", "-", "crop+", "zoom+", "-", "free+", "smart", "rect+", "ellipse+", "polygon+", "-", "textt+", "-", "dim+", "conn+", "-", "shadow+", "transp", "-", "eye+", "fill+", "sfill", "-", "ring"];
document.getElementById("toolbox").innerHTML = tools.map((t, i) => {
  if (t === "-") return "<hr>";
  const id = t.replace("+", "");
  const mark = t.endsWith("+") ? '<svg class="corner-mark"><use href="#flag"/></svg>' : "";
  const cls = i === 0 ? "tb on" : id === "ring" ? "tb last" : "tb";
  return `<button class="${cls}" aria-label="${id}"><svg><use href="#${id}"/></svg>${mark}</button>`;
}).join("");

const colors = ["#231f20", "#414042", "#58595b", "#6d6e71", "#808285", "#939598", "#a3a8aa", "#bcbec0", "#d1d3d4", "#e6e7e8", "#ffffff", "#2e3192", "#00aeef", "#00a650", "#fff200", "#ed1c24", "#ec008c", "#a3468c", "#f58220", "#f7aaaa", "#7e6a62", "#c5c1e0", "#9a93c8", "#6e87c4", "#7068b0", "#8078a5", "#465e88", "#4f4a66", "#5f7896", "#0094dd", "#8bd8f8", "#a0bcd0", "#8499a8", "#64747f", "#454f58", "#487070", "#3a8872", "#5f9088", "#48a190", "#539c6e", "#50c4d0", "#42a1b0", "#a6bfb2", "#c9e5d4", "#98d0a8", "#7f988c"];
document.getElementById("swatches").innerHTML = colors.map(c => `<button aria-label="${c}" style="background:${c}"></button>`).join("");
```
